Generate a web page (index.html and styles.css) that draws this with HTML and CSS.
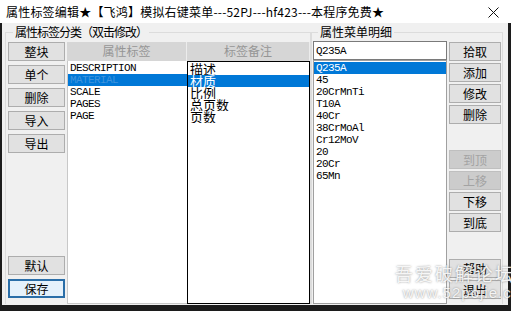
FILE: index.html
```html
<!DOCTYPE html>
<html lang="zh-CN">
<head>
  <meta charset="UTF-8">
  <title>属性标签编辑</title>
  <link rel="stylesheet" href="styles.css">
</head>
<body>
  <div class="window">
    <div class="titlebar">
      <span class="title">属性标签编辑★【飞鸿】模拟右键菜单---52PJ---hf423---本程序免费★</span>
      <svg class="close" width="11" height="11" viewBox="0 0 11 11">
        <path d="M0.5 0.5 L10.5 10.5 M10.5 0.5 L0.5 10.5" stroke="#111" stroke-width="1" fill="none"/>
      </svg>
    </div>

    <div class="client">
      <fieldset class="group group-left">
        <legend>属性标签分类（双击修改）</legend>
        <div class="btn-col btn-col-left">
          <button class="btn">整块</button>
          <button class="btn">单个</button>
          <button class="btn">删除</button>
          <button class="btn">导入</button>
          <button class="btn">导出</button>
          <button class="btn push-down">默认</button>
          <button class="btn btn-default">保存</button>
        </div>
        <div class="lists">
          <div class="column col-tags">
            <div class="col-head">属性标签</div>
            <ul class="listbox list-tags">
              <li>DESCRIPTION</li>
              <li class="selected dim">MATERIAL</li>
              <li>SCALE</li>
              <li>PAGES</li>
              <li>PAGE</li>
            </ul>
          </div>
          <div class="column col-notes">
            <div class="col-head">标签备注</div>
            <ul class="listbox list-notes">
              <li>描述</li>
              <li class="selected">材质</li>
              <li>比例</li>
              <li>总页数</li>
              <li>页数</li>
            </ul>
          </div>
        </div>
      </fieldset>

      <fieldset class="group group-right">
        <legend>属性菜单明细</legend>
        <div class="detail-col">
          <input class="textbox" type="text" value="Q235A">
          <ul class="listbox list-items">
            <li class="selected">Q235A</li>
            <li>45</li>
            <li>20CrMnTi</li>
            <li>T10A</li>
            <li>40Cr</li>
            <li>38CrMoAl</li>
            <li>Cr12MoV</li>
            <li>20</li>
            <li>20Cr</li>
            <li>65Mn</li>
          </ul>
        </div>
        <div class="btn-col btn-col-right">
          <button class="btn">拾取</button>
          <button class="btn">添加</button>
          <button class="btn">修改</button>
          <button class="btn">删除</button>
          <button class="btn sep" disabled>到顶</button>
          <button class="btn" disabled>上移</button>
          <button class="btn">下移</button>
          <button class="btn">到底</button>
          <button class="btn push-down">帮助</button>
          <button class="btn">退出</button>
        </div>
      </fieldset>
    </div>

    <div class="watermark">
      <div class="wm-name">吾爱破解论坛</div>
      <div class="wm-url">www.52pojie.cn</div>
    </div>
  </div>
</body>
</html>
```

FILE: styles.css
```css
body {
  margin: 0;
  background: #1c1c1c;
  font-family: "Noto Sans CJK SC", "Liberation Sans", sans-serif;
  font-size: 12px;
  color: #000;
}

.window {
  position: relative;
  width: 511px;
  height: 311px;
  display: flex;
  flex-direction: column;
  overflow: hidden;
}

.titlebar {
  height: 23px;
  background: #fff;
  display: flex;
  align-items: center;
  padding: 0 12px 0 6px;
  flex-shrink: 0;
}

.title {
  flex: 1;
  font-size: 12px;
  line-height: 23px;
  white-space: nowrap;
  letter-spacing: 0.2px;
}

.close {
  display: block;
  margin-top: 1px;
}

.client {
  height: 282px;
  margin: 0 3px 0 2px;
  background: #f0f0f0;
  display: flex;
  padding: 1px 0 1px 3px;
  box-sizing: border-box;
}

.group {
  margin: 0;
  border: 1px solid #dcdcdc;
  display: flex;
  min-width: 0;
}

.group legend {
  font-size: 12px;
  line-height: 16px;
  padding: 0 2px;
}

.group-left {
  width: 306px;
  box-sizing: border-box;
  padding: 2px 0 0 2px;
  border-bottom: none;
}

.group-left legend {
  margin-left: 5px;
  letter-spacing: -1px;
}

.group-right {
  width: 192px;
  box-sizing: border-box;
  padding: 1px 1px 0 1px;
  border-bottom: none;
}

.group-right legend {
  margin-left: 5px;
}

/* buttons */
.btn-col {
  display: flex;
  flex-direction: column;
}

.btn-col-left {
  width: 57px;
  gap: 4px;
  padding-bottom: 6px;
}

.btn-col-right {
  width: 52px;
  margin-left: 2px;
  margin-top: 1px;
  gap: 2px;
  padding-bottom: 5px;
}

.btn {
  height: 19px;
  margin: 0;
  padding: 0;
  background: #e1e1e1;
  border: 1px solid #adadad;
  font-family: "Noto Sans CJK SC", sans-serif;
  font-size: 12px;
  line-height: 16px;
  color: #000;
}

.btn:disabled {
  background: #cccccc;
  border-color: #bfbfbf;
  color: #a3a3a3;
}

.btn-default {
  border: 2px solid #2a6ea8;
  background: #e5f1fb;
}

.push-down {
  margin-top: auto;
}

.sep {
  margin-top: 24px;
}

/* list columns */
.lists {
  display: flex;
  margin-left: 2px;
  flex: 1;
}

.column {
  display: flex;
  flex-direction: column;
}

.col-tags {
  width: 120px;
}

.col-notes {
  width: 123px;
}

.col-head {
  height: 19px;
  background: #d6d6d6;
  border-right: 1px solid #ececec;
  color: #959595;
  text-align: center;
  line-height: 18px;
  flex-shrink: 0;
}

.listbox {
  list-style: none;
  margin: 0;
  padding: 1px 0 0;
  background: #fff;
  flex: 1;
}

.listbox li {
  height: 12px;
  line-height: 12px;
  padding-left: 2px;
  white-space: nowrap;
  overflow: hidden;
}

.listbox li.selected {
  background: #0078d7;
  color: #fff;
}

.listbox li.dim {
  color: #3f93dc;
}

.list-tags,
.list-items {
  font-family: "Liberation Mono", monospace;
  font-size: 11px;
  letter-spacing: -0.6px;
}

.list-tags {
  border-left: 1px solid #c8c8c8;
  border-bottom: 1px solid #c8c8c8;
}

.list-notes {
  border: 1px solid #000;
  font-size: 13px;
}

/* right detail column */
.detail-col {
  width: 134px;
  display: flex;
  flex-direction: column;
}

.textbox {
  height: 19px;
  margin: 0;
  padding: 0 0 0 2px;
  box-sizing: border-box;
  border: 1px solid #7a7a7a;
  font-family: "Liberation Mono", monospace;
  font-size: 11px;
  letter-spacing: -0.6px;
  background: #fff;
  outline: none;
}

.list-items {
  border: 1px solid #a0a0a0;
  margin-top: 0;
}

/* watermark overlay */
.watermark {
  position: absolute;
  right: -10px;
  bottom: 9px;
  color: rgba(255, 255, 255, 0.88);
  text-shadow: 0 0 2px rgba(90, 90, 90, 0.7);
  white-space: nowrap;
}

.wm-name {
  font-size: 18px;
  line-height: 22px;
  letter-spacing: 2px;
}

.wm-url {
  font-family: "Liberation Sans", sans-serif;
  font-size: 15px;
  line-height: 18px;
  letter-spacing: 1px;
  margin-left: 8px;
}
```
